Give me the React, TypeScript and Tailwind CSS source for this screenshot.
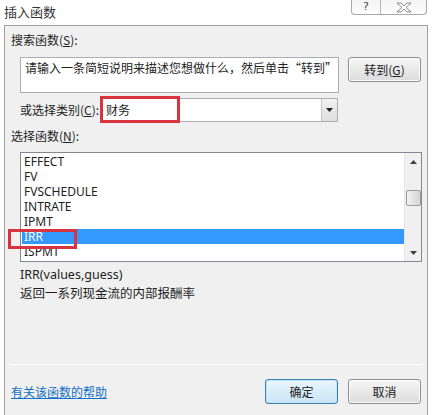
import React from "react";

const cjk = { fontFamily: '"Noto Sans CJK SC", "Noto Sans", sans-serif' };

function Btn({ children, focused }: { children: React.ReactNode; focused?: boolean }) {
  return (
    <div
      className={
        "w-[73px] h-[25px] flex items-center justify-center rounded-[3px] text-[12px] text-[#222] border " +
        (focused
          ? "border-[#3c7fb1] bg-gradient-to-b from-[#eaf6fd] to-[#c9e5f6] shadow-[inset_0_0_0_1px_#bfe3f7]"
          : "border-[#8e8f8f] bg-gradient-to-b from-[#f6f6f6] to-[#dcdcdc] shadow-[inset_0_0_0_1px_#fbfbfb]")
      }
    >
      {children}
    </div>
  );
}

export default function App() {
  const items = ["EFFECT", "FV", "FVSCHEDULE", "INTRATE", "IPMT", "IRR", "ISPMT"];
  return (
    <div className="relative w-[432px] h-[415px] bg-white overflow-hidden text-[#1e1e1e]" style={cjk}>
      {/* title bar */}
      <div className="h-[25px] flex items-start justify-between">
        <div className="pl-[4px] pt-[4px] text-[13px] leading-[16px] text-[#333]">插入函数</div>
        <div className="mr-[5px] flex h-[15px] border border-t-0 border-[#a9a9a9] rounded-b-[4px] bg-gradient-to-b from-[#f4f4f4] to-[#fdfdfd]">
          <div className="w-[29px] flex items-center justify-center border-r border-[#b5b5b5] text-[11px] leading-none text-[#444] pb-[1px]" style={{ fontFamily: '"DejaVu Sans", sans-serif' }}>
            ?
          </div>
          <div className="w-[45px] flex items-center justify-center">
            <svg width="16" height="11" viewBox="0 0 16 11">
              <path d="M1 1 L5 1 L8 4 L11 1 L15 1 L10 5.5 L15 10 L11 10 L8 7 L5 10 L1 10 L6 5.5 Z" fill="#fdfdfd" stroke="#8a8a8a" strokeWidth="1" />
            </svg>
          </div>
        </div>
      </div>

      {/* panel */}
      <div className="mx-[4px] h-[400px] border border-[#a0a0a0] bg-[#f0f0f0] relative">
        <div className="pl-[6px] pt-[6px] text-[12px] leading-[16px]">
          搜索函数(<span className="underline">S</span>):
        </div>
        <div className="pl-[15px] mt-[9px] flex items-start gap-[9px]">
          <div className="w-[319px] h-[36px] bg-white border border-[#abadb3] pl-[4px] pt-[2px] text-[12px] leading-[16px] text-[#222]">
            请输入一条简短说明来描述您想做什么，然后单击“转到”
          </div>
          <Btn>
            转到(<span className="underline">G</span>)
          </Btn>
        </div>
        <div className="pl-[15px] mt-[5px] flex items-center">
          <div className="w-[82px] text-[12px] leading-[16px]">
            或选择类别(<span className="underline">C</span>):
          </div>
          <div className="w-[236px] h-[24px] bg-white border border-[#abadb3] flex items-center">
            <div className="flex-1 pl-[3px] text-[12px] leading-[16px]">财务</div>
            <div className="w-[16px] h-[22px] border-l border-[#c6c6c6] bg-gradient-to-b from-[#f2f2f2] to-[#dedede] flex items-center justify-center">
              <svg width="7" height="4" viewBox="0 0 7 4">
                <path d="M0 0 L7 0 L3.5 4 Z" fill="#222" />
              </svg>
            </div>
          </div>
        </div>
        <div className="pl-[6px] mt-[6px] text-[12px] leading-[16px]">
          选择函数(<span className="underline">N</span>):
        </div>
        <div className="ml-[15px] mt-[8px] w-[402px] h-[110px] bg-white border border-[#828790] flex">
          <div className="flex-1 pt-[1px] pl-[1px]" style={{ fontFamily: '"Noto Sans", sans-serif' }}>
            {items.map((it) => (
              <div
                key={it}
                className={
                  "h-[15px] pl-[2px] text-[12px] leading-[15px] " +
                  (it === "IRR" ? "bg-[#3399ff] text-white" : "text-[#1e1e1e]")
                }
              >
                {it}
              </div>
            ))}
          </div>
          <div className="w-[17px] h-full bg-[#f0f0f0] border-l border-[#e6e6e6] flex flex-col items-center">
            <div className="h-[17px] flex items-center justify-center">
              <svg width="7" height="4" viewBox="0 0 7 4">
                <path d="M0 4 L7 4 L3.5 0 Z" fill="#404040" />
              </svg>
            </div>
            <div className="mt-[20px] w-[15px] h-[16px] rounded-[2px] border border-[#9a9a9a] bg-gradient-to-r from-[#f2f2f2] to-[#d4d4d4]" />
            <div className="flex-1" />
            <div className="h-[17px] flex items-center justify-center">
              <svg width="7" height="4" viewBox="0 0 7 4">
                <path d="M0 0 L7 0 L3.5 4 Z" fill="#404040" />
              </svg>
            </div>
          </div>
        </div>
        <div className="pl-[15px] mt-[4px] text-[12.5px] leading-[18px]">
          <div style={{ fontFamily: '"Noto Sans", sans-serif' }}>IRR(values,guess)</div>
          <div>返回一系列现金流的内部报酬率</div>
        </div>
        <div className="mx-[5px] mt-[62px] h-[1px] bg-[#dcdcdc] border-b border-white" />
        <div className="pl-[6px] mt-[14px] flex items-start justify-between pr-[6px]">
          <div className="mt-[5px] text-[12px] leading-[16px] text-[#0f6ec7] underline">有关该函数的帮助</div>
          <div className="flex gap-[10px]">
            <Btn focused>确定</Btn>
            <Btn>取消</Btn>
          </div>
        </div>
      </div>

      {/* red highlight boxes */}
      <div className="absolute left-[100px] top-[96px] w-[80px] h-[27px] border-[3px] border-[#d8343f]" />
      <div className="absolute left-[8px] top-[229px] w-[69px] h-[20px] border-[3px] border-[#d8343f]" />
    </div>
  );
}
